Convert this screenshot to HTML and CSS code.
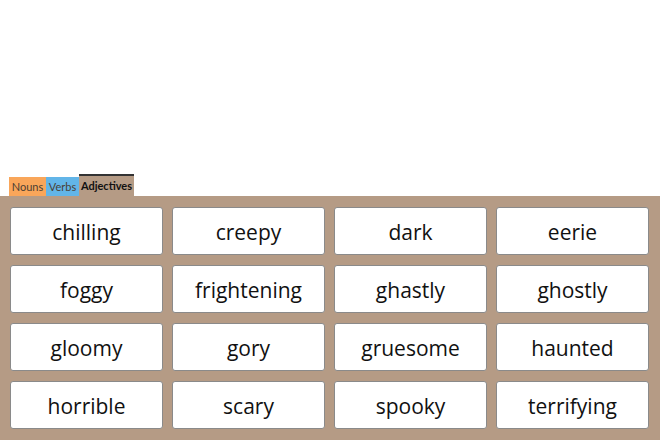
FILE: index.html
```html
<!DOCTYPE html>
<html>
<head>
<meta charset="utf-8">
<link rel="stylesheet" href="styles.css">
</head>
<body>
<div class="page">
  <div class="spacer"></div>
  <div class="tabs">
    <div class="tab tab-nouns">Nouns</div>
    <div class="tab tab-verbs">Verbs</div>
    <div class="tab tab-adj">Adjectives</div>
  </div>
  <div class="panel">
    <div class="card">chilling</div>
    <div class="card">creepy</div>
    <div class="card">dark</div>
    <div class="card">eerie</div>
    <div class="card">foggy</div>
    <div class="card">frightening</div>
    <div class="card">ghastly</div>
    <div class="card">ghostly</div>
    <div class="card">gloomy</div>
    <div class="card">gory</div>
    <div class="card">gruesome</div>
    <div class="card">haunted</div>
    <div class="card">horrible</div>
    <div class="card">scary</div>
    <div class="card">spooky</div>
    <div class="card">terrifying</div>
  </div>
</div>
</body>
</html>
```
FILE: styles.css
```css
html, body {
  margin: 0;
  padding: 0;
  background: #ffffff;
}
.page {
  width: 660px;
  height: 440px;
  display: flex;
  flex-direction: column;
  overflow: hidden;
  font-family: "Open Sans", "Noto Sans", sans-serif;
}
.spacer {
  height: 174px;
  flex: none;
}
.tabs {
  display: flex;
  align-items: flex-end;
  padding-left: 9px;
  height: 22px;
  flex: none;
}
.tab {
  font-family: Lato, "Open Sans", sans-serif;
  font-size: 11px;
  line-height: 20px;
  height: 19px;
  color: #4a3f35;
  text-align: center;
}
.tab-nouns {
  background: #f9a65a;
  width: 37px;
}
.tab-verbs {
  background: #62b5e8;
  width: 33px;
}
.tab-adj {
  background: #b59b85;
  font-weight: bold;
  color: #111;
  height: 20px;
  line-height: 20px;
  border-top: 2px solid #333;
  width: 55px;
}
.panel {
  flex: 1;
  background: #b59b85;
  padding: 11px 10px 0 10px;
  display: grid;
  grid-template-columns: repeat(4, 153px);
  grid-auto-rows: 48px;
  column-gap: 9px;
  row-gap: 10px;
  align-content: start;
}
.card {
  background: #ffffff;
  border: 1px solid #8a8a8a;
  border-radius: 3px;
  box-sizing: border-box;
  display: flex;
  align-items: center;
  justify-content: center;
  font-size: 21px;
  color: #111;
  padding-top: 2px;
}
```
